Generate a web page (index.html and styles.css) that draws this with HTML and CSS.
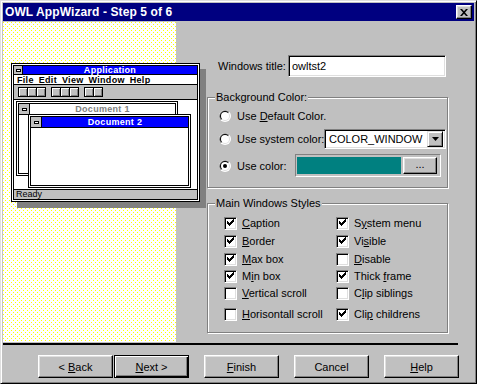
FILE: index.html
```html
<!DOCTYPE html>
<html lang="en">
<head>
    <meta charset="UTF-8">
    <title>OWL AppWizard - Step 5 of 6</title>
    <link rel="stylesheet" href="styles.css">
</head>
<body>
    <svg class="defs" width="0" height="0">
        <symbol id="radio-off" viewBox="0 0 12 12">
            <circle cx="6" cy="6" r="6" fill="#fff"/>
            <path d="M1.76 10.24A6 6 0 0 1 10.24 1.76Z" fill="#808080"/>
            <circle cx="6" cy="6" r="5" fill="#dfdfdf"/>
            <path d="M2.46 9.54A5 5 0 0 1 9.54 2.46Z" fill="#000"/>
            <circle cx="6" cy="6" r="4" fill="#fff"/>
        </symbol>
        <symbol id="radio-on" viewBox="0 0 12 12">
            <use href="#radio-off"/>
            <circle cx="6" cy="6" r="2" fill="#000"/>
        </symbol>
        <symbol id="tick" viewBox="0 0 11 11">
            <path d="M2 3h1v3H2zM3 4h1v3H3zM4 5h1v3H4zM5 4h1v3H5zM6 3h1v3H6zM7 2h1v3H7zM8 1h1v3H8z" fill="#000"/>
        </symbol>
    </svg>

    <div class="dialog">
        <div class="titlebar">
            <span class="title">OWL AppWizard - Step 5 of 6</span>
            <span class="close-btn">
                <svg width="8" height="7" viewBox="0 0 8 7"><path d="M0 0h2l2 2.2L6 0h2L5 3.5 8 7H6L4 4.8 2 7H0l3-3.5z" fill="#000"/></svg>
            </span>
        </div>

        <div class="main">
            <!-- Preview of the generated app -->
            <div class="preview-pane">
                <div class="app-win">
                    <div class="app-inner">
                        <div class="app-caption">
                            <span class="sysbox"><i></i></span>
                            <span class="cap-text">Application</span>
                        </div>
                        <div class="app-menu">
                            <span><u>F</u>ile</span>
                            <span><u>E</u>dit</span>
                            <span><u>V</u>iew</span>
                            <span><u>W</u>indow</span>
                            <span><u>H</u>elp</span>
                        </div>
                        <div class="app-toolbar">
                            <span class="tb-group"><i></i><i></i><i></i></span>
                            <span class="tb-group"><i></i><i></i><i></i></span>
                            <span class="tb-group"><i></i><i></i></span>
                        </div>
                        <div class="mdi">
                            <div class="doc doc1">
                                <div class="doc-inner">
                                    <div class="doc-caption">
                                        <span class="sysbox"><i></i></span>
                                        <span class="cap-text">Document 1</span>
                                    </div>
                                </div>
                            </div>
                            <div class="doc doc2">
                                <div class="doc-inner">
                                    <div class="doc-caption">
                                        <span class="sysbox"><i></i></span>
                                        <span class="cap-text">Document 2</span>
                                    </div>
                                </div>
                            </div>
                        </div>
                        <div class="app-status">Ready</div>
                    </div>
                </div>
            </div>

            <!-- Options -->
            <div class="form">
                <div class="field-row">
                    <span class="field-label">Windows title:</span>
                    <div class="textbox">owltst2</div>
                </div>

                <div class="group bg-group">
                    <span class="group-title">Background Color:</span>
                    <div class="radio-row">
                        <svg class="radio"><use href="#radio-off"/></svg>
                        <span class="radio-label">Use <u>D</u>efault Color.</span>
                    </div>
                    <div class="radio-row system-row">
                        <svg class="radio"><use href="#radio-off"/></svg>
                        <span class="radio-label">Use system color:</span>
                        <div class="combo">
                            <span class="combo-text">COLOR_WINDOW</span>
                            <span class="combo-btn">
                                <svg width="7" height="4" viewBox="0 0 7 4"><path d="M0 0h7L3.5 4z" fill="#000"/></svg>
                            </span>
                        </div>
                    </div>
                    <div class="radio-row color-row">
                        <svg class="radio"><use href="#radio-on"/></svg>
                        <span class="radio-label">Use color:</span>
                        <div class="color-frame">
                            <span class="swatch"></span>
                            <span class="btn small-btn"><span>...</span></span>
                        </div>
                    </div>
                </div>

                <div class="group styles-group">
                    <span class="group-title">Main Windows Styles</span>
                    <div class="check-grid">
                        <div class="check-item"><span class="check"><svg><use href="#tick"/></svg></span><span><u>C</u>aption</span></div>
                        <div class="check-item"><span class="check"><svg><use href="#tick"/></svg></span><span>S<u>y</u>stem menu</span></div>
                        <div class="check-item"><span class="check"><svg><use href="#tick"/></svg></span><span><u>B</u>order</span></div>
                        <div class="check-item"><span class="check"><svg><use href="#tick"/></svg></span><span>Vi<u>s</u>ible</span></div>
                        <div class="check-item"><span class="check"><svg><use href="#tick"/></svg></span><span><u>M</u>ax box</span></div>
                        <div class="check-item"><span class="check"></span><span><u>D</u>isable</span></div>
                        <div class="check-item"><span class="check"><svg><use href="#tick"/></svg></span><span>M<u>i</u>n box</span></div>
                        <div class="check-item"><span class="check"><svg><use href="#tick"/></svg></span><span>Thick <u>f</u>rame</span></div>
                        <div class="check-item"><span class="check"></span><span><u>V</u>ertical scroll</span></div>
                        <div class="check-item"><span class="check"></span><span>C<u>l</u>ip siblings</span></div>
                        <div class="check-item"><span class="check"></span><span><u>H</u>orisontall scroll</span></div>
                        <div class="check-item"><span class="check"><svg><use href="#tick"/></svg></span><span>Cli<u>p</u> childrens</span></div>
                    </div>
                </div>
            </div>
        </div>

        <div class="separator"></div>

        <div class="buttons">
            <span class="btn"><span>&lt; <u>B</u>ack</span></span>
            <span class="btn default-btn"><span><u>N</u>ext &gt;</span></span>
            <span class="btn spaced"><span><u>F</u>inish</span></span>
            <span class="btn spaced"><span>Cancel</span></span>
            <span class="btn spaced"><span><u>H</u>elp</span></span>
        </div>
    </div>
</body>
</html>
```

FILE: styles.css
```css
* {
    box-sizing: border-box;
}
body {
    margin: 0;
    background-color: #c0c0c0;
    font-family: "Liberation Sans", Arial, sans-serif;
    font-size: 11px;
    color: #000;
}
.defs {
    position: absolute;
}
u {
    text-decoration-thickness: 1px;
    text-underline-offset: 1px;
}

/* Window frame */
.dialog {
    width: 477px;
    height: 384px;
    border: 1px solid;
    border-color: #dfdfdf #000 #000 #dfdfdf;
    box-shadow: inset 1px 1px #fff, inset -1px -1px #808080;
    padding: 2px;
    background-color: #c0c0c0;
}
.titlebar {
    height: 18px;
    background-color: #000080;
    color: #fff;
    display: flex;
    align-items: center;
    justify-content: space-between;
    padding: 0 2px;
}
.title {
    font-size: 12px;
    font-weight: bold;
    letter-spacing: 0.1px;
    line-height: 18px;
}
.close-btn {
    width: 16px;
    height: 14px;
    background-color: #c0c0c0;
    border: 1px solid;
    border-color: #fff #000 #000 #fff;
    box-shadow: inset -1px -1px #808080, inset 1px 1px #dfdfdf;
    display: flex;
    align-items: center;
    justify-content: center;
}

.main {
    margin-top: 1px;
    height: 320px;
    display: flex;
}

/* Left preview pane */
.preview-pane {
    width: 173px;
    position: relative;
    background-color: #fff;
    background-image: url("data:image/svg+xml,%3Csvg xmlns='http://www.w3.org/2000/svg' width='4' height='4'%3E%3Crect width='1' height='1' fill='%23ff0'/%3E%3Crect x='2' y='2' width='1' height='1' fill='%23ff0'/%3E%3C/svg%3E");
}
.app-win {
    position: absolute;
    left: 8px;
    top: 41px;
    width: 189px;
    height: 139px;
    border: 1px solid #000;
    padding: 1px;
    background-color: #fff;
    box-shadow: 6px 6px 0 #808080;
    z-index: 1;
}
.app-inner {
    height: 100%;
    border: 1px solid #000;
    display: flex;
    flex-direction: column;
    font-size: 9px;
    font-weight: bold;
    letter-spacing: 0.3px;
}
.app-caption,
.doc-caption {
    display: flex;
    border-bottom: 1px solid #000;
    flex: none;
}
.app-caption {
    height: 9px;
}
.doc-caption {
    height: 11px;
}
.sysbox {
    width: 9px;
    background-color: #c0c0c0;
    border-right: 1px solid #000;
    display: flex;
    align-items: center;
    justify-content: center;
}
.doc-caption .sysbox {
    width: 11px;
}
.sysbox i {
    width: 5px;
    height: 3px;
    background-color: #fff;
    border: 1px solid #000;
}
.cap-text {
    flex: 1;
    text-align: center;
    line-height: 9px;
    background-color: #0000ff;
    color: #fff;
}
.doc-caption .cap-text {
    line-height: 11px;
}
.doc1 .cap-text {
    background-color: #fff;
    color: #808080;
}
.app-menu {
    height: 10px;
    border-bottom: 1px solid #000;
    display: flex;
    gap: 5px;
    padding-left: 3px;
    line-height: 10px;
    flex: none;
}
.app-toolbar {
    height: 15px;
    background-color: #c0c0c0;
    border-bottom: 1px solid #000;
    display: flex;
    align-items: center;
    gap: 5px;
    padding-left: 4px;
    flex: none;
}
.tb-group {
    display: flex;
}
.tb-group i {
    width: 10px;
    height: 10px;
    border: 1px solid #000;
    margin-left: -1px;
    background-color: #c0c0c0;
    box-shadow: inset 1px 1px #fff, inset -1px -1px #808080;
}
.tb-group i:first-child {
    margin-left: 0;
}
.mdi {
    flex: 1;
    position: relative;
    background-color: #fff;
    border-bottom: 1px solid #000;
}
.doc {
    position: absolute;
    border: 1px solid #000;
    padding: 1px;
    background-color: #fff;
}
.doc-inner {
    height: 100%;
    border: 1px solid #000;
}
.doc1 {
    left: 2px;
    top: 1px;
    width: 162px;
    height: 75px;
}
.doc2 {
    left: 14px;
    top: 14px;
    width: 163px;
    height: 74px;
}
.app-status {
    height: 9px;
    background-color: #c0c0c0;
    font-weight: normal;
    line-height: 9px;
    padding-left: 2px;
    letter-spacing: 0;
    flex: none;
}

/* Right form */
.form {
    flex: 1;
    padding-left: 31px;
}
.field-row {
    margin-top: 33px;
    padding-left: 11px;
    display: flex;
    align-items: center;
}
.field-label {
    width: 70px;
}
.textbox,
.combo {
    border: 1px solid;
    border-color: #808080 #fff #fff #808080;
    box-shadow: inset 1px 1px #000, inset -1px -1px #dfdfdf;
    background-color: #fff;
}
.textbox {
    width: 158px;
    height: 22px;
    line-height: 20px;
    padding-left: 3px;
}

.group {
    position: relative;
    width: 241px;
    border: 1px solid #808080;
    box-shadow: inset 1px 1px #fff, 1px 1px #fff;
}
.group-title {
    position: absolute;
    left: 7px;
    top: -7px;
    line-height: 13px;
    padding: 0 1px;
    background-color: #c0c0c0;
}
.bg-group {
    margin-top: 20px;
    height: 91px;
    padding: 8px 0 0 11px;
}
.radio-row {
    height: 20px;
    display: flex;
    align-items: center;
}
.radio {
    width: 12px;
    height: 12px;
    margin-right: 6px;
}
.radio-label {
    white-space: nowrap;
}
.system-row {
    margin-top: 3px;
}
.system-row .radio-label {
    width: 87px;
}
.combo {
    width: 122px;
    height: 20px;
    display: flex;
    align-items: center;
    justify-content: space-between;
    padding: 0 2px 0 4px;
}
.combo-btn {
    width: 16px;
    height: 16px;
    background-color: #c0c0c0;
    border: 1px solid;
    border-color: #dfdfdf #000 #000 #dfdfdf;
    box-shadow: inset 1px 1px #fff, inset -1px -1px #808080;
    display: flex;
    align-items: center;
    justify-content: center;
}
.color-row {
    margin-top: 5px;
    height: 23px;
}
.color-row .radio-label {
    width: 58px;
}
.color-frame {
    width: 146px;
    height: 23px;
    border: 1px solid;
    border-color: #808080 #fff #fff #808080;
    padding: 2px 3px 2px 1px;
    display: flex;
    gap: 2px;
}
.swatch {
    flex: 1;
    background-color: #008080;
}

.styles-group {
    margin-top: 15px;
    height: 130px;
    padding: 10px 0 0 16px;
}
.check-grid {
    display: grid;
    grid-template-columns: 112px auto;
    grid-template-rows: 18px 18px 18px 16px 18px 24px;
}
.check-item {
    display: flex;
    align-items: center;
    gap: 5px;
    white-space: nowrap;
}
.check {
    width: 13px;
    height: 13px;
    border: 1px solid;
    border-color: #808080 #fff #fff #808080;
    box-shadow: inset 1px 1px #000, inset -1px -1px #dfdfdf;
    background-color: #fff;
    display: flex;
}
.check svg {
    width: 11px;
    height: 11px;
}

/* Bottom bar */
.separator {
    width: 455px;
    height: 2px;
    margin-top: 1px;
    background-color: #000;
}
.buttons {
    display: flex;
    padding: 10px 0 0 35px;
}
.btn {
    width: 75px;
    height: 23px;
    background-color: #c0c0c0;
    border: 1px solid;
    border-color: #fff #000 #000 #fff;
    box-shadow: inset -1px -1px #808080, inset 1px 1px #dfdfdf;
    display: flex;
    align-items: center;
    justify-content: center;
}
.default-btn {
    margin-left: 1px;
    border-color: #000;
    box-shadow: inset 1px 1px #fff, inset -1px -1px #000, inset -2px -2px #808080;
}
.spaced {
    margin-left: 15px;
}
.small-btn {
    width: 34px;
    height: 17px;
    padding-bottom: 3px;
}
```
